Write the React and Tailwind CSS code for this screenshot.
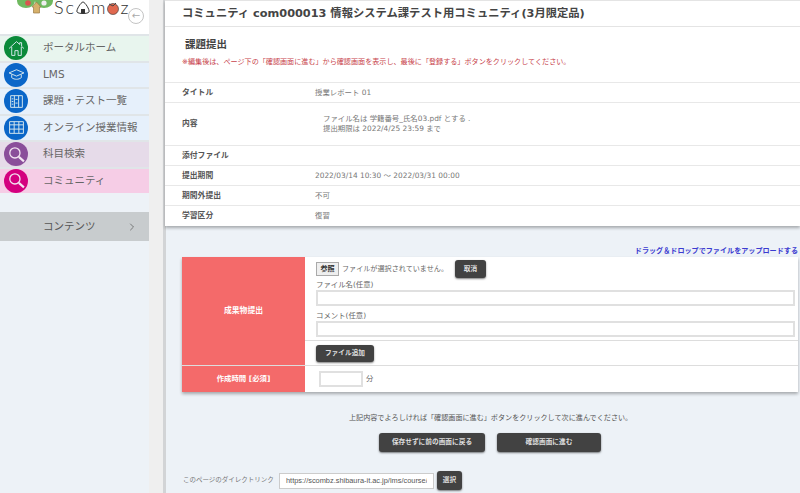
import React from 'react';
import { ChevronRight } from 'lucide-react';

const jp = "font-['DejaVu_Sans','Noto_Sans_CJK_JP',sans-serif]";

const menu = [
  { label: 'ポータルホーム', row: 'bg-[#e8f5ee]', dot: 'bg-[#0b8a3a]', icon: 'home' },
  { label: 'LMS', row: 'bg-[#e6f0fb]', dot: 'bg-[#0a66c8]', icon: 'cap' },
  { label: '課題・テスト一覧', row: 'bg-[#e6f0fb]', dot: 'bg-[#0a66c8]', icon: 'book' },
  { label: 'オンライン授業情報', row: 'bg-[#e6f0fb]', dot: 'bg-[#0a66c8]', icon: 'grid' },
  { label: '科目検索', row: 'bg-[#e6dbe9]', dot: 'bg-[#8a4f9a]', icon: 'search' },
  { label: 'コミュニティ', row: 'bg-[#f6cde6]', dot: 'bg-[#d4007f]', icon: 'search' },
];

const MenuIcon = ({ type }) => {
  const props = { width: 17, height: 17, viewBox: '0 0 16 16', fill: 'none', stroke: '#d8e8ee', strokeWidth: 0.9 };
  if (type === 'home') {
    return (
      <svg {...props}>
        <path d="M1 8 L8 1.5 L11 4.2 V2.5 H12.8 V6 L15 8 M3.5 6.5 V14.5 H6.5 V10 H9.5 V14.5 H12.5 V6.5" />
      </svg>
    );
  }
  if (type === 'cap') {
    return (
      <svg {...props}>
        <path d="M1 6.5 L8 3.5 L15 6.5 L8 9.5 Z M3.5 8 V11 C6 13 10 13 12.5 11 V8" />
      </svg>
    );
  }
  if (type === 'book') {
    return (
      <svg {...props}>
        <path d="M2.5 2.5 H13.5 V13.5 H2.5 Z M6 2.5 V13.5 M10 2.5 V13.5 M3.5 5.5 H5 M3.5 8 H5 M3.5 10.5 H5 M7 6 H9 M7 9.5 H9" />
      </svg>
    );
  }
  if (type === 'grid') {
    return (
      <svg {...props}>
        <path d="M1.5 2.5 H14.5 V13.5 H1.5 Z M1.5 5.5 H14.5 M1.5 9.5 H14.5 M5.8 2.5 V13.5 M10.2 2.5 V13.5" />
      </svg>
    );
  }
  return (
    <svg {...props} stroke="#f3e6f2" strokeWidth={1.2}>
      <circle cx="6.5" cy="6.5" r="4.8" />
      <path d="M10.2 10.2 L15 14.5" strokeWidth={2} />
    </svg>
  );
};

const Logo = () => (
  <div className="flex items-start h-[17px] pl-[17px] text-[#333] font-['Lato',sans-serif] font-light text-[18px] leading-[14px]">
    <svg width="37" height="14" viewBox="0 0 37 14" className="shrink-0">
      <ellipse cx="9" cy="1" rx="9" ry="7" fill="#6fb95f" />
      <ellipse cx="27" cy="1" rx="9" ry="7" fill="#6fb95f" />
      <circle cx="11" cy="3" r="2.8" fill="#d9544f" />
      <circle cx="27" cy="3" r="2.6" fill="#eee" />
      <path d="M19.5 2 L24 7 H22.5 V13 H16.5 V7 H15 Z" fill="#d6b06a" stroke="#9a7a45" strokeWidth="0.7" />
    </svg>
    <span className="tracking-[2px]">Sc</span>
    <svg width="15" height="14" viewBox="0 0 15 14" className="shrink-0 mt-[1px]">
      <path d="M7 1 C9 1 14 9 13 11 C12 13 2 13 1 11 C0 9 5 1 7 1 Z" fill="none" stroke="#333" strokeWidth="1" />
      <rect x="5" y="8" width="4" height="4" fill="#333" />
    </svg>
    <span>m</span>
    <svg width="14" height="14" viewBox="0 0 14 14" className="shrink-0 mt-[1px]">
      <circle cx="7" cy="8" r="5.5" fill="#e0684f" stroke="#333" strokeWidth="0.6" />
      <path d="M3 3 L7 5 L10 2" fill="none" stroke="#444" strokeWidth="1" />
    </svg>
    <span className="ml-[1px] text-[18px]">z</span>
  </div>
);

const Sidebar = () => (
  <aside className="w-[149px] shrink-0 relative">
    <div className="bg-white h-[34px]">
      <Logo />
    </div>
    <div className="absolute left-[128px] top-[8px] w-[16px] h-[16px] rounded-full border-[1.5px] border-[#c4c4c4] bg-white flex items-center justify-center text-[#aaa] text-[10px] leading-none">←</div>
    <ul>
      {menu.map((m) => (
        <li key={m.label} className={`h-[26.5px] flex items-center border-t-2 border-[#e0e5e8] ${m.row}`}>
          <span className={`ml-[4px] w-[24px] h-[24px] rounded-full flex items-center justify-center shrink-0 ${m.dot}`}>
            <MenuIcon type={m.icon} />
          </span>
          <span className="ml-[15px] text-[10.5px] text-[#666] whitespace-nowrap">{m.label}</span>
        </li>
      ))}
    </ul>
    <div className="mt-[18.5px] h-[29px] pt-[2px] bg-[#c8ccce] flex items-center justify-between pl-[43px] pr-[11px] text-[10.5px] text-[#555]">
      <span>コンテンツ</span>
      <ChevronRight size={12} strokeWidth={1.4} className="text-[#555]" />
    </div>
  </aside>
);

const InfoRow = ({ label, h, children }) => (
  <div className={`flex items-center border-t border-[#e8e8e8] ${h}`}>
    <div className="w-[150px] pl-[17px] text-[7.8px] font-bold text-[#555]">{label}</div>
    <div className="text-[7.4px] text-[#777]">{children}</div>
  </div>
);

const DarkButton = ({ className, children }) => (
  <button className={`bg-[#424242] text-[#dedede] rounded-[3px] shadow-[0_1px_2px_rgba(0,0,0,0.5)] flex items-center justify-center text-[6.7px] font-bold ${className}`}>
    {children}
  </button>
);

export default function App() {
  return (
    <div className={`w-[800px] h-[493px] overflow-hidden flex bg-[#edf2f7] ${jp}`}>
      <Sidebar />
      <div className="w-[14px] shrink-0 bg-[#efefef]" />
      <main className="flex-1 min-w-0 border-l-[3px] border-[#d2d4d6] relative">
        <section className="bg-white ml-[-1px] shadow-[0_2px_3px_rgba(0,0,0,0.3)]">
          <h1 className="h-[27px] flex items-center pl-[17px] pt-[1px] text-[11.3px] font-bold text-[#444] border-t border-b border-[#e4e4e4] whitespace-nowrap">
            コミュニティ com000013 情報システム課テスト用コミュニティ(3月限定品)
          </h1>
          <div className="h-[55px] pl-[20px] pt-[10px]">
            <h2 className="text-[10.5px] font-bold text-[#444] leading-[14px]">課題提出</h2>
            <p className="mt-[5px] ml-[-3px] text-[7.1px] text-[#c8444c] leading-[12px] whitespace-nowrap">
              ※編集後は、ページ下の「確認画面に進む」から確認画面を表示し、最後に「登録する」ボタンをクリックしてください。
            </p>
          </div>
          <InfoRow label="タイトル" h="h-[20px]">授業レポート 01</InfoRow>
          <InfoRow label="内容" h="h-[43px]">
            <div className="pl-[8px] leading-[10px]">
              <div>ファイル名は 学籍番号_氏名03.pdf とする .</div>
              <div>提出期限は 2022/4/25 23:59 まで</div>
            </div>
          </InfoRow>
          <InfoRow label="添付ファイル" h="h-[20px]" />
          <InfoRow label="提出期間" h="h-[20px]">2022/03/14 10:30 ～ 2022/03/31 00:00</InfoRow>
          <InfoRow label="期間外提出" h="h-[20px]">不可</InfoRow>
          <InfoRow label="学習区分" h="h-[21px]">復習</InfoRow>
        </section>

        <div className="pl-[16px]">
          <p className="mt-[19px] h-[12px] pr-[2px] text-right text-[7.1px] leading-[12px] font-bold text-[#3b3bd0] whitespace-nowrap">
            ドラッグ＆ドロップでファイルをアップロードする
          </p>
          <div className="bg-white mr-[2px] shadow-[0_2px_3px_rgba(0,0,0,0.3)]">
            <div className="flex h-[108px]">
              <div className="w-[123px] shrink-0 bg-[#f46a6a] flex items-center justify-center text-[7.8px] font-bold text-white">成果物提出</div>
              <div className="flex-1 min-w-0">
                <div className="h-[84px] px-[11px] pt-[3px] border-b border-[#ddd]">
                  <div className="flex items-center h-[18px] text-[7.1px] text-[#666]">
                    <span className="w-[23px] h-[14px] bg-[#efefef] border border-[#aaa] flex items-center justify-center text-[7.1px] font-bold text-[#333]">参照</span>
                    <span className="ml-[3px] whitespace-nowrap">ファイルが選択されていません。</span>
                    <DarkButton className="ml-[7px] w-[31px] h-[18px]">取消</DarkButton>
                  </div>
                  <label className="block text-[7.4px] leading-[10px] text-[#666] mt-[2px]">ファイル名(任意)</label>
                  <div className="h-[16px] border-2 border-[#e0e0e0] mr-[-8px]" />
                  <label className="block text-[7.4px] leading-[10px] text-[#666] mt-[5px]">コメント(任意)</label>
                  <div className="h-[16px] border-2 border-[#e0e0e0] mr-[-8px]" />
                </div>
                <div className="h-[24px] px-[11px] flex items-center">
                  <DarkButton className="w-[58px] h-[17px]">ファイル追加</DarkButton>
                </div>
              </div>
            </div>
            <div className="flex h-[27px] border-t border-[#ddd]">
              <div className="w-[123px] shrink-0 bg-[#f46a6a] flex items-center justify-center text-[7.4px] font-bold text-white">作成時間 [必須]</div>
              <div className="flex-1 flex items-center pl-[14px] text-[7.4px] text-[#666]">
                <span className="w-[44px] h-[16px] border-2 border-[#e0e0e0] block" />
                <span className="ml-[3px]">分</span>
              </div>
            </div>
          </div>

          <p className="mt-[20px] text-[7.1px] leading-[12px] text-[#555] pl-[167px] whitespace-nowrap">
            上記内容でよろしければ「確認画面に進む」ボタンをクリックして次に進んでください。
          </p>
          <div className="flex mt-[9px] pl-[197px] gap-[12px]">
            <DarkButton className="w-[106px] h-[19px]">保存せずに前の画面に戻る</DarkButton>
            <DarkButton className="w-[104px] h-[19px]">確認画面に進む</DarkButton>
          </div>
          <div className="flex items-center mt-[19px] h-[19px]">
            <span className="w-[97px] pl-[1px] text-[6.5px] text-[#777] whitespace-nowrap">このページのダイレクトリンク</span>
            <input
              readOnly
              value="https://scombz.shibaura-it.ac.jp/lms/course/report/submission"
              className="w-[155px] h-[16px] bg-white border border-[#ccc] text-[7.4px] text-[#555] px-[6px] outline-none font-['Liberation_Sans',sans-serif]"
            />
            <DarkButton className="ml-[3px] w-[25px] h-[19px]">選択</DarkButton>
          </div>
        </div>
      </main>
    </div>
  );
}
